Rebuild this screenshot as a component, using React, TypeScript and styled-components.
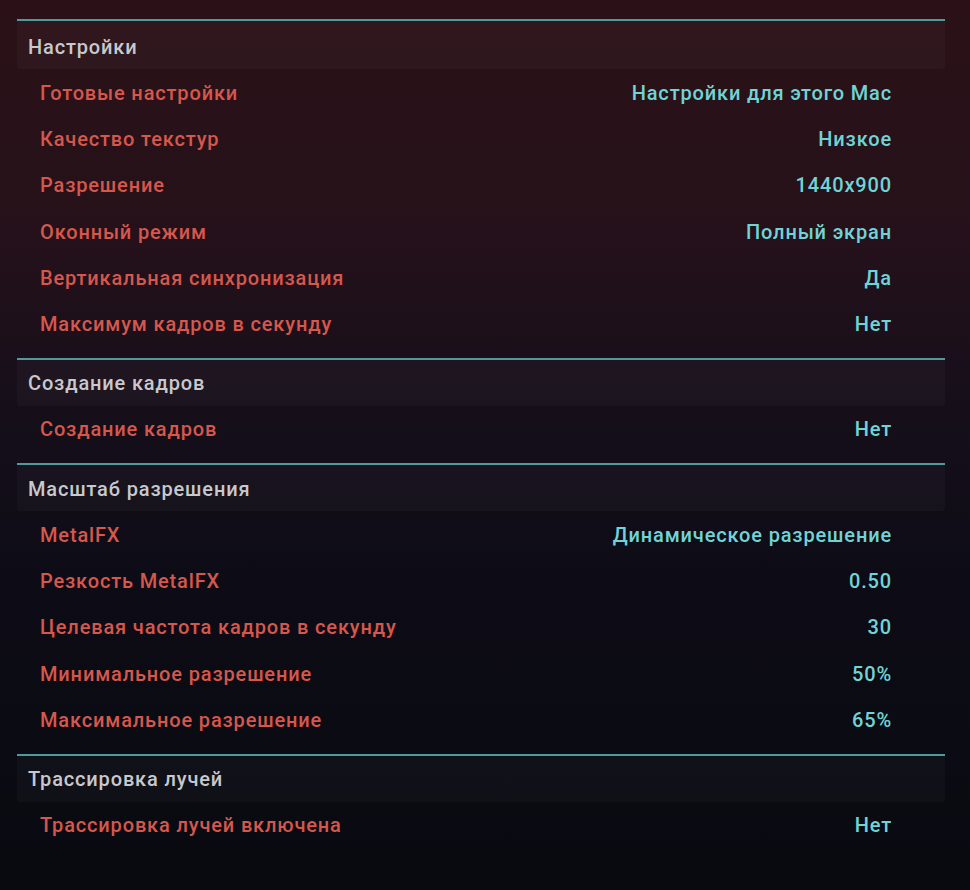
import React from "react";
import styled, { createGlobalStyle } from "styled-components";

interface Option {
  label: string;
  value: string;
}

interface Section {
  title: string;
  options: Option[];
}

const sections: Section[] = [
  {
    title: "Настройки",
    options: [
      { label: "Готовые настройки", value: "Настройки для этого Mac" },
      { label: "Качество текстур", value: "Низкое" },
      { label: "Разрешение", value: "1440x900" },
      { label: "Оконный режим", value: "Полный экран" },
      { label: "Вертикальная синхронизация", value: "Да" },
      { label: "Максимум кадров в секунду", value: "Нет" },
    ],
  },
  {
    title: "Создание кадров",
    options: [{ label: "Создание кадров", value: "Нет" }],
  },
  {
    title: "Масштаб разрешения",
    options: [
      { label: "MetalFX", value: "Динамическое разрешение" },
      { label: "Резкость MetalFX", value: "0.50" },
      { label: "Целевая частота кадров в секунду", value: "30" },
      { label: "Минимальное разрешение", value: "50%" },
      { label: "Максимальное разрешение", value: "65%" },
    ],
  },
  {
    title: "Трассировка лучей",
    options: [{ label: "Трассировка лучей включена", value: "Нет" }],
  },
];

export default function App() {
  return (
    <>
      <GlobalStyle />
      <Screen>
        {sections.map((section, i) => (
          <Group key={section.title}>
            <GroupHeader $tall={i === 0}>{section.title}</GroupHeader>
            {section.options.map((opt) => (
              <OptionRow key={opt.label}>
                <OptionLabel>{opt.label}</OptionLabel>
                <OptionValue>{opt.value}</OptionValue>
              </OptionRow>
            ))}
          </Group>
        ))}
      </Screen>
    </>
  );
}

const GlobalStyle = createGlobalStyle`
  html, body {
    margin: 0;
    padding: 0;
    background: #090a10;
  }
`;

const Screen = styled.div`
  width: 970px;
  height: 890px;
  box-sizing: border-box;
  padding: 19px 25px 0 17px;
  font-family: Roboto, "Liberation Sans", sans-serif;
  font-weight: 500;
  font-size: 20px;
  letter-spacing: 0.85px;
  background: linear-gradient(
    180deg,
    #2b1117 0%,
    #26111a 25%,
    #160f1a 45%,
    #0d0c16 65%,
    #090a10 100%
  );
  overflow: hidden;
`;

const Group = styled.section`
  border-top: 2px solid #4f9a9c;
  padding-bottom: 11px;
`;

const GroupHeader = styled.div<{ $tall?: boolean }>`
  height: ${(p) => (p.$tall ? 48 : 46)}px;
  box-sizing: border-box;
  padding: ${(p) => (p.$tall ? 3 : 1)}px 0 0 11px;
  display: flex;
  align-items: center;
  color: #c9c8cc;
  background: rgba(255, 255, 255, 0.028);
  border-radius: 0 0 3px 3px;
`;

const OptionRow = styled.div`
  height: 46.3px;
  display: flex;
  align-items: center;
  justify-content: space-between;
  padding: 1px 53px 0 23px;
  box-sizing: border-box;
`;

const OptionLabel = styled.span`
  color: #d6574c;
`;

const OptionValue = styled.span`
  color: #70d4d6;
`;
